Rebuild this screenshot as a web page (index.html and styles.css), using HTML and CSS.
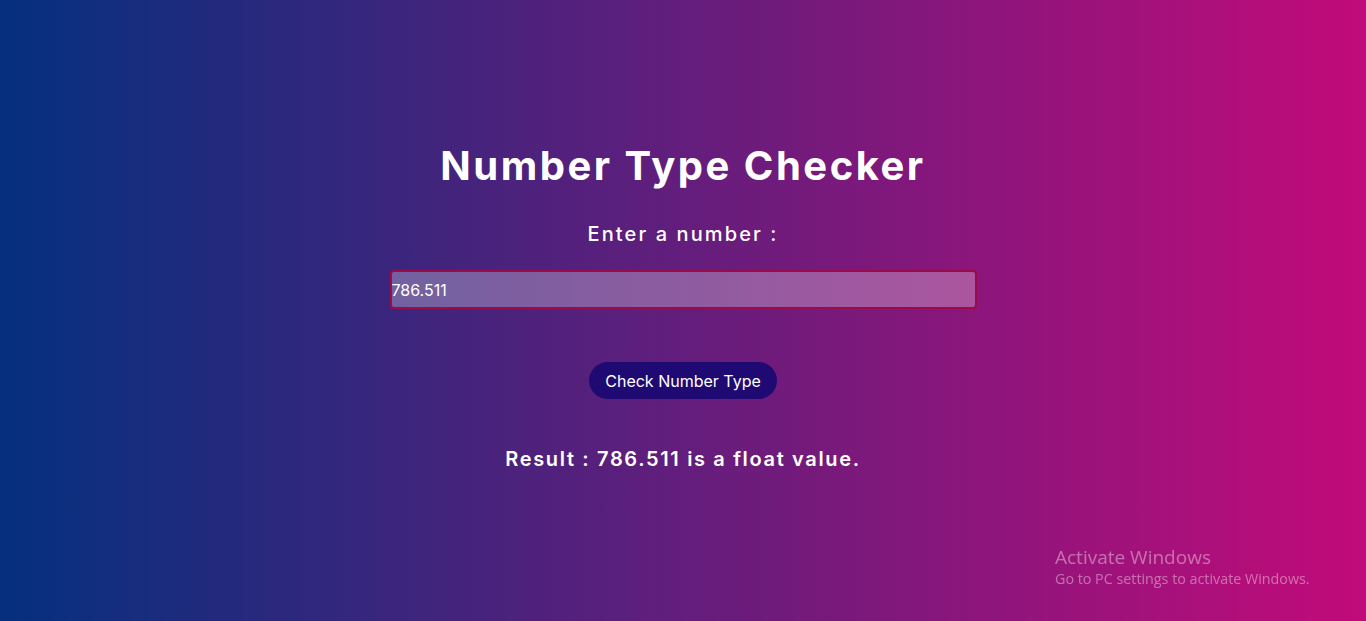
FILE: index.html
```html
<!DOCTYPE html>
<html lang="en">
<head>
<meta charset="utf-8">
<title>Number Type Checker</title>
<link rel="stylesheet" href="styles.css">
</head>
<body>
<main class="checker">
  <h1 class="title">Number Type Checker</h1>
  <label class="label" for="num">Enter a number :</label>
  <input class="field" id="num" type="text" value="786.511">
  <button class="btn" type="button">Check Number Type</button>
  <p class="result">Result : 786.511 is a float value.</p>
</main>
<div class="watermark">
  <div class="wm-title">Activate Windows</div>
  <div class="wm-sub">Go to PC settings to activate Windows.</div>
</div>
</body>
</html>
```

FILE: styles.css
```css
html, body {
  margin: 0;
  padding: 0;
  height: 100%;
}
body {
  background: linear-gradient(to right, #04307e, #c20b7a);
  font-family: Inter, "Noto Sans", sans-serif;
  color: #fff;
  overflow: hidden;
}
.checker {
  display: flex;
  flex-direction: column;
  align-items: center;
  padding-top: 140px;
}
.title {
  margin: 0;
  font-size: 40px;
  font-weight: 700;
  letter-spacing: 2.5px;
  line-height: 52px;
}
.label {
  margin-top: 30px;
  font-size: 20px;
  font-weight: 500;
  letter-spacing: 2.1px;
  line-height: 24px;
}
.field {
  margin-top: 24px;
  box-sizing: border-box;
  width: 587px;
  height: 39px;
  border: 2px solid #9b0a4a;
  border-radius: 4px;
  background: rgba(255, 255, 255, 0.28);
  color: #fff;
  font-family: inherit;
  font-size: 16px;
  padding: 0;
  outline: none;
}
.btn {
  margin-top: 53px;
  width: 188px;
  height: 37px;
  border: none;
  border-radius: 19px;
  background: #1f0a73;
  color: #fff;
  font-family: inherit;
  font-size: 16px;
  font-weight: 400;
  padding: 0;
}
.result {
  margin: 48px 0 0;
  font-size: 20px;
  font-weight: 600;
  letter-spacing: 1.65px;
  line-height: 24px;
}
.watermark {
  position: fixed;
  left: 1055px;
  top: 545px;
  color: rgba(255, 255, 255, 0.4);
  font-family: "Open Sans", "Noto Sans", sans-serif;
}
.wm-title {
  font-size: 19px;
  line-height: 24px;
}
.wm-sub {
  font-size: 14.3px;
  line-height: 20px;
}
```
